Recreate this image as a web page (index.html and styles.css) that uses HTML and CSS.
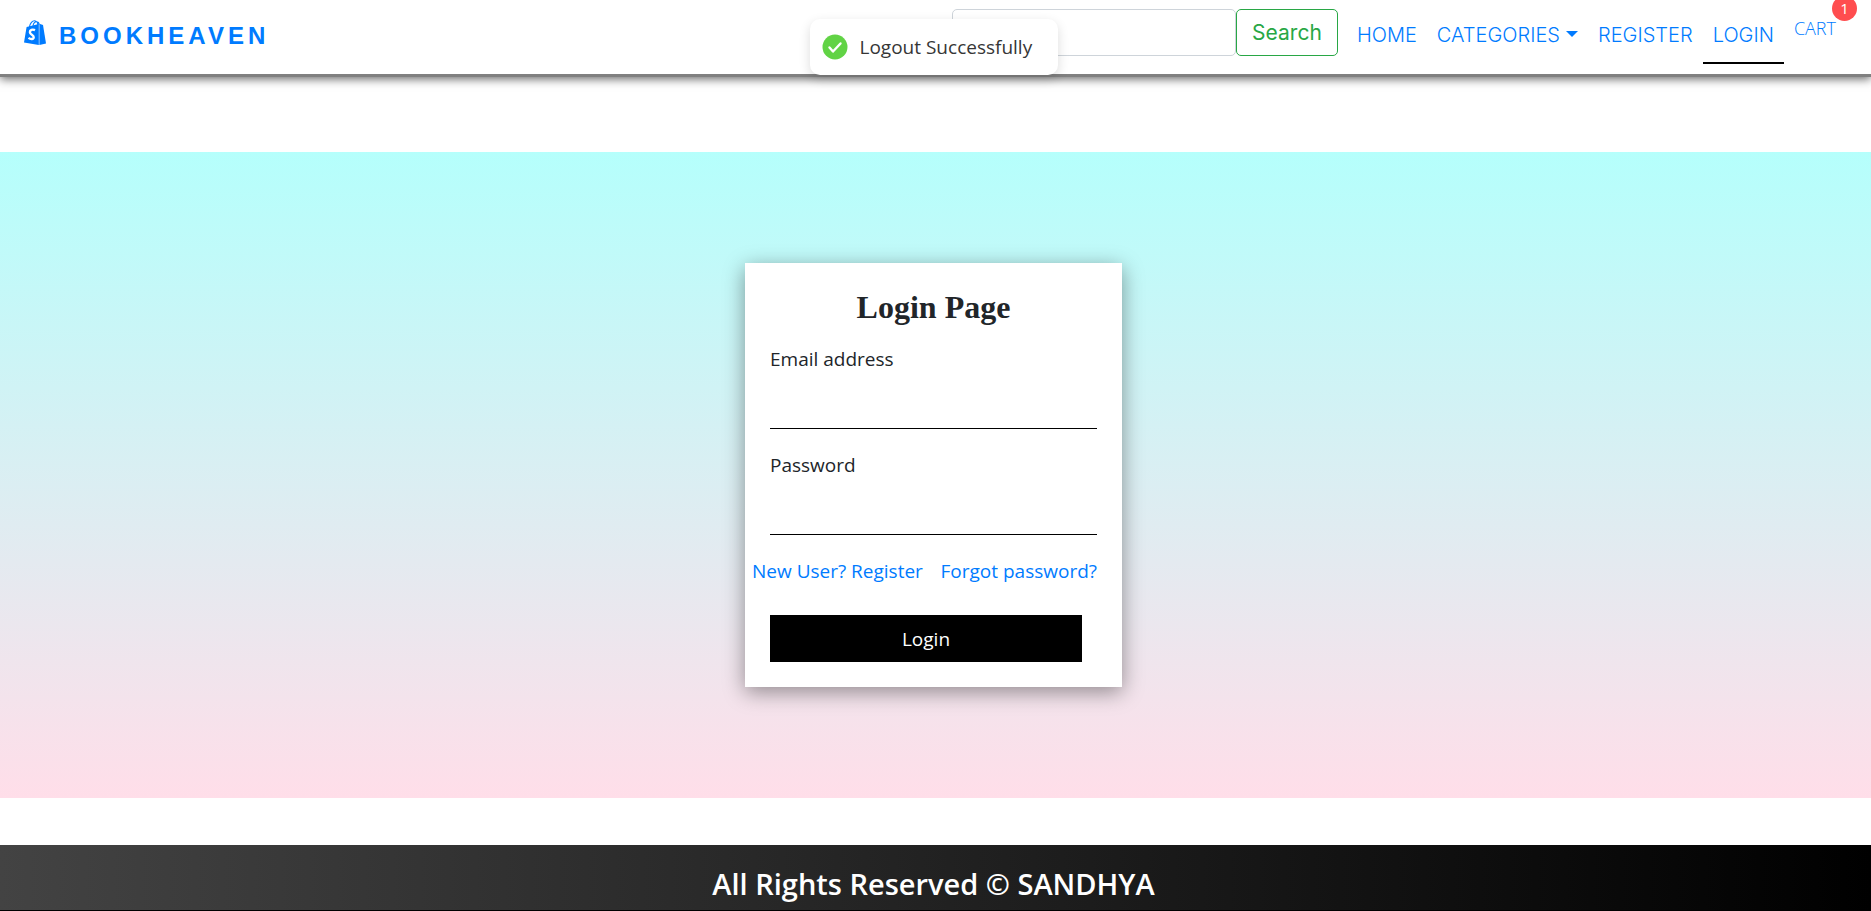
FILE: index.html
```html
<!DOCTYPE html>
<html lang="en">
<head>
<meta charset="utf-8">
<meta name="viewport" content="width=device-width, initial-scale=1">
<title>Login - BookHeaven</title>
<link rel="stylesheet" href="styles.css">
</head>
<body>
<header class="navbar">
  <a class="brand" href="#">
    <svg class="brand-icon" viewBox="0 0 22 25" aria-hidden="true">
      <path d="M2.6 6.9 14.8 3.9V25L0 22.4z" fill="currentColor"/>
      <path d="M15.4 3.8 19 5l3 18.4L15.4 25z" fill="currentColor"/>
      <path d="M5.4 7C6 3 8.500 .7 10.500 .7S13.800 3 13.900 5M9 6C9.400 3.500 11 1.800 12.500 1.800S15 3 15.200 4.500" fill="none" stroke="currentColor" stroke-width="1.100"/>
      <path d="M11 10.200C8.500 9 5.800 10 5.900 12.300c.1 2.400 3.900 2.500 3.800 4.900-.1 2.300-3 2.300-5.200.7" fill="none" stroke="#fff" stroke-width="2.400"/>
    </svg>
    <span>BOOKHEAVEN</span>
  </a>
  <form class="search" role="search">
    <input class="search-input" type="search" aria-label="Search">
    <button class="search-button" type="button">Search</button>
  </form>
  <nav class="links">
    <a class="link" href="#">HOME</a>
    <a class="link dropdown" href="#">CATEGORIES</a>
    <a class="link" href="#">REGISTER</a>
    <a class="link active" href="#">LOGIN</a>
    <a class="cart" href="#">CART<span class="badge">1</span></a>
  </nav>
</header>
<div class="toast" role="status">
  <svg class="toast-icon" viewBox="0 0 26 26" aria-hidden="true">
    <circle cx="13" cy="13" r="12.500" fill="#61d345"/>
    <path d="M7.500 13.500 11 17.500 18.500 9.500" fill="none" stroke="#fff" stroke-width="2.400" stroke-linecap="round" stroke-linejoin="round"/>
  </svg>
  <span>Logout Successfully</span>
</div>
<main class="page">
  <form class="card">
    <h1 class="title">Login Page</h1>
    <label class="label" for="email">Email address</label>
    <input class="field" id="email" type="email">
    <label class="label" for="password">Password</label>
    <input class="field" id="password" type="password">
    <div class="help">
      <a href="#">New User? Register</a>
      <a href="#">Forgot password?</a>
    </div>
    <button class="submit" type="button">Login</button>
  </form>
</main>
<footer class="footer">
  <h2 class="rights">All Rights Reserved © SANDHYA</h2>
</footer>
</body>
</html>
```
FILE: styles.css
```css
* { box-sizing: border-box; }

body {
  margin: 0;
  background: #fff;
  color: #212529;
  font: 19px/30px "Open Sans", "Noto Sans", sans-serif;
  overflow: hidden;
}

a { color: #007bff; text-decoration: none; }

.navbar {
  display: flex;
  align-items: flex-start;
  height: 77px;
  padding: 9px 35px 0 24px;
  border-bottom: 3px solid #808080;
  box-shadow: 0 2px 9px rgba(0, 0, 0, 0.6);
}

.brand {
  display: flex;
  align-items: center;
  gap: 13px;
  margin-right: auto;
  padding-top: 9px;
  font: bold 24px/36px "Liberation Sans", Arial, sans-serif;
  letter-spacing: 4px;
}

.brand-icon { width: 22px; height: 25px; margin-bottom: 7px; }

.search { display: flex; margin-right: 9px; }

.search-input {
  width: 284px;
  height: 47px;
  padding: 0 15px;
  border: 1px solid #ced4da;
  border-radius: 5px;
  font: inherit;
}

.search-button {
  width: 102px;
  height: 47px;
  padding: 0;
  border: 1px solid #28a745;
  border-radius: 5px;
  background: #fff;
  color: #28a745;
  font: 21px/30px Inter, sans-serif;
}

.links { display: flex; align-items: flex-start; }

.link {
  padding: 11px 10px 12px;
  border-bottom: 2px solid transparent;
  font: 300 20px/30px Inter, sans-serif;
}

.active { border-color: #000; }

.dropdown::after {
  content: "";
  display: inline-block;
  margin-left: 6px;
  vertical-align: 5px;
  border: 6px solid transparent;
  border-top-color: currentColor;
  border-bottom: 0;
}

.cart {
  position: relative;
  padding: 5px 0 0 10px;
  font: 300 18px/28px "Open Sans", sans-serif;
}

.badge {
  position: absolute;
  top: -13px;
  right: -21px;
  width: 25px;
  height: 25px;
  border-radius: 50%;
  background: #ff4d4f;
  color: #fff;
  font: 15px/25px "Open Sans", sans-serif;
  text-align: center;
}

.toast {
  position: absolute;
  top: 19px;
  left: 50%;
  display: flex;
  align-items: center;
  gap: 12px;
  width: 248px;
  height: 56px;
  margin-left: -126px;
  padding: 0 12px;
  border-radius: 10px;
  background: #fff;
  box-shadow: 0 4px 12px rgba(0, 0, 0, 0.14);
  color: #363636;
  white-space: nowrap;
}

.toast-icon { width: 26px; height: 26px; }

.page {
  display: flex;
  justify-content: center;
  margin-top: 75px;
  padding: 111px 4px 111px 0;
  background: linear-gradient(#b5fffc, #ffdee9);
}

.card {
  display: flex;
  flex-direction: column;
  width: 377px;
  padding: 25px;
  background: #fff;
  box-shadow: 0 5px 20px rgba(0, 0, 0, 0.4);
}

.title {
  margin: 0 0 18px;
  font: bold 32px/38px "Liberation Serif", serif;
  text-align: center;
}

.label { margin-bottom: 8px; }

.field {
  height: 47px;
  margin-bottom: 21px;
  padding: 0 15px;
  border: 0;
  border-bottom: 1px solid #000;
  background: transparent;
  font: inherit;
}

.help {
  display: flex;
  justify-content: space-between;
  margin: 0 0 29px -18px;
}

.submit {
  width: 312px;
  height: 47px;
  border: 0;
  background: #000;
  color: #fff;
  font: inherit;
}

.footer {
  margin-top: 47px;
  padding: 20px 4px 8px 0;
  border-bottom: 1px solid #000;
  background: linear-gradient(to right, #434343, #000);
}

.rights {
  margin: 0;
  color: #fff;
  font: 600 29px/37px "Open Sans", "Noto Sans", sans-serif;
  text-align: center;
}
```
